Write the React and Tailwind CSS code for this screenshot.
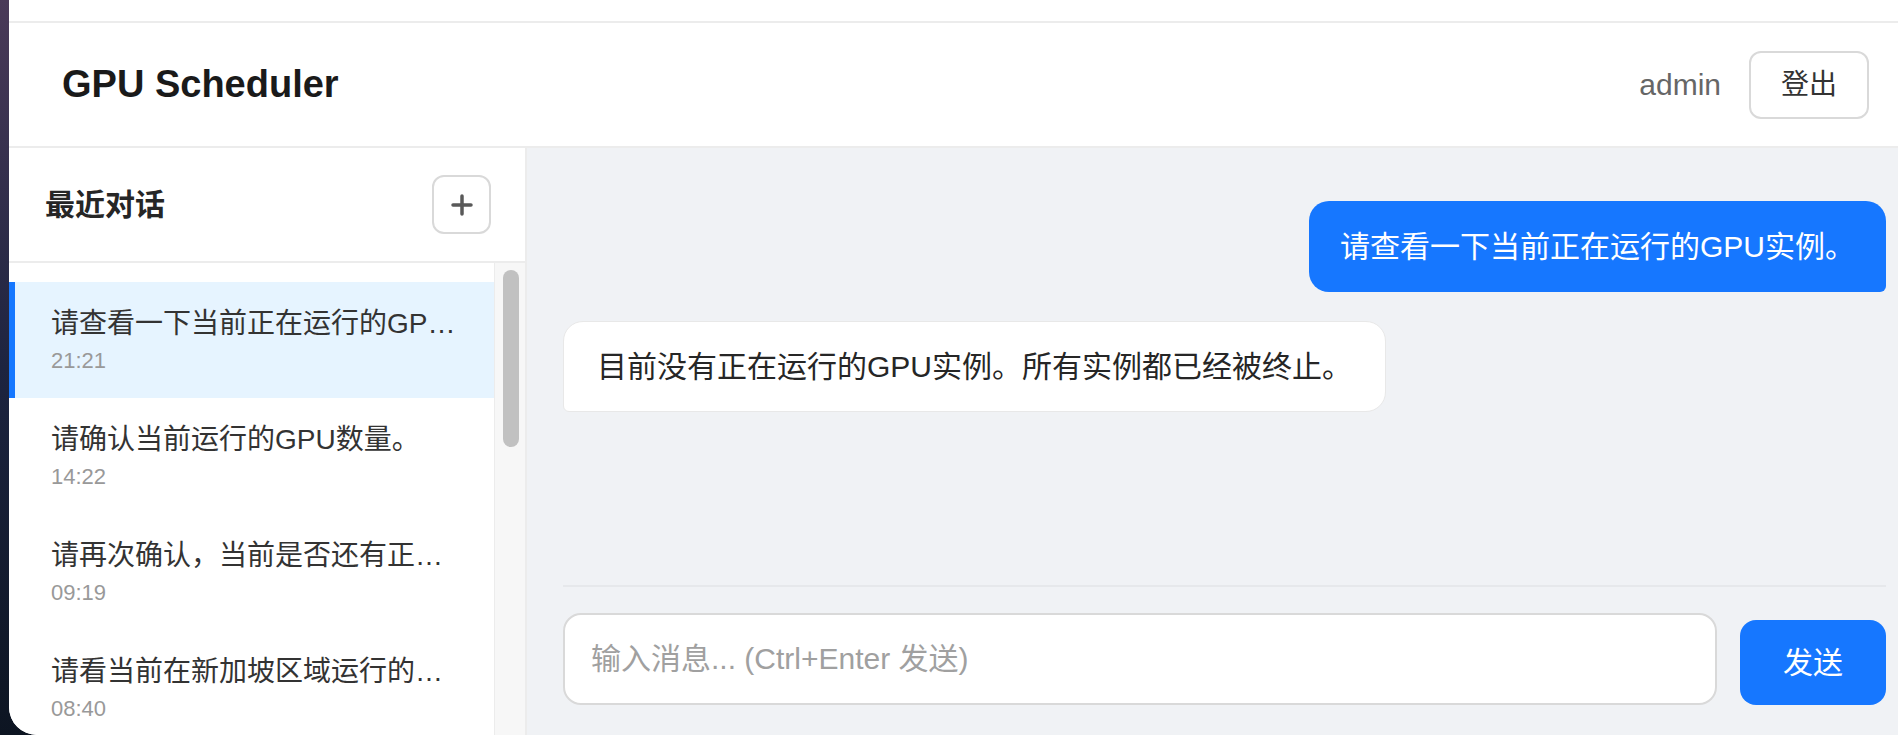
import React from 'react';

const conversations = [
  { title: '请查看一下当前正在运行的GPU实例。', time: '21:21', active: true },
  { title: '请确认当前运行的GPU数量。', time: '14:22' },
  { title: '请再次确认，当前是否还有正在运行的GPU实例？', time: '09:19' },
  { title: '请看当前在新加坡区域运行的GPU实例。', time: '08:40' },
];

export default function App() {
  return (
    <div className="flex h-[735px] w-[1898px] overflow-hidden bg-linear-to-b from-[#4a3a58] via-[#1d2440] to-[#0d1522] font-[family-name:'Liberation_Sans','Noto_Sans_CJK_SC',sans-serif]">
      {/* App window */}
      <div className="ml-[9px] flex flex-1 flex-col overflow-hidden rounded-bl-[28px] bg-white">
        {/* Top strip */}
        <div className="h-[23px] shrink-0 border-b-2 border-[#ececec] bg-white" />

        {/* Header */}
        <header className="flex h-[125px] shrink-0 items-center justify-between border-b-2 border-[#ececec] pl-[53px] pr-[29px]">
          <h1 className="text-[38px] font-bold text-[#1a1a1a]">GPU Scheduler</h1>
          <div className="flex items-center gap-[28px]">
            <span className="text-[30px] text-[#666]">admin</span>
            <button className="h-[68px] w-[120px] rounded-[12px] border-2 border-[#d9d9d9] bg-white text-[28px] text-[#333]">
              登出
            </button>
          </div>
        </header>

        <div className="flex min-h-0 flex-1">
          {/* Sidebar */}
          <aside className="flex w-[518px] shrink-0 flex-col border-r-2 border-[#ececec] bg-white">
            <div className="flex h-[115px] shrink-0 items-center justify-between border-b-2 border-[#ececec] pl-[36px] pr-[34px]">
              <span className="text-[30px] font-semibold text-[#262626]">最近对话</span>
              <button className="flex h-[59px] w-[59px] items-center justify-center rounded-[12px] border-2 border-[#d9d9d9] bg-white">
                <svg width="22" height="22" viewBox="0 0 22 22">
                  <path d="M11 2v18M2 11h18" stroke="#595959" strokeWidth="3.5" strokeLinecap="round" />
                </svg>
              </button>
            </div>

            <div className="flex min-h-0 flex-1">
              <div className="min-w-0 flex-1 overflow-hidden pt-[19px]">
                {conversations.map((c, i) => (
                  <div
                    key={i}
                    className={
                      c.active
                        ? 'border-l-[6px] border-[#1677ff] bg-[#e6f4ff] pb-[22px] pl-[36px] pr-[36px] pt-[25px]'
                        : 'border-l-[6px] border-transparent pb-[22px] pl-[36px] pr-[36px] pt-[25px]'
                    }
                  >
                    <div className="truncate text-[28px] leading-[34px] text-[#333]">{c.title}</div>
                    <div className="mt-[5px] text-[22px] leading-[30px] text-[#999]">{c.time}</div>
                  </div>
                ))}
              </div>
              {/* Scrollbar */}
              <div className="flex w-[31px] shrink-0 flex-col border-l border-[#ececec] bg-[#f7f7f7] pl-[8px] pt-[7px]">
                <div className="h-[177px] w-[16px] rounded-full bg-[#c1c1c1]" />
              </div>
            </div>
          </aside>

          {/* Chat area */}
          <main className="flex min-w-0 flex-1 flex-col bg-[#f0f2f5] pl-[36px] pr-[12px]">
            <div className="flex flex-1 flex-col gap-[29px] pt-[53px]">
              <div className="flex justify-end">
                <div className="rounded-[20px] rounded-br-[6px] bg-[#1677ff] px-[31px] py-[23px] text-[30px] leading-[45px] text-white">
                  请查看一下当前正在运行的GPU实例。
                </div>
              </div>
              <div className="flex justify-start">
                <div className="rounded-[20px] rounded-bl-[6px] border border-[#e8e8e8] bg-white px-[33px] py-[22px] text-[30px] leading-[45px] text-[#262626]">
                  目前没有正在运行的GPU实例。所有实例都已经被终止。
                </div>
              </div>
            </div>

            {/* Input */}
            <div className="flex h-[150px] shrink-0 items-end gap-[23px] border-t-2 border-[#e6e8eb] pb-[30px]">
              <textarea
                rows={1}
                placeholder="输入消息... (Ctrl+Enter 发送)"
                className="h-[92px] flex-1 resize-none overflow-hidden rounded-[18px] border-2 border-[#d9d9d9] bg-white px-[26px] py-[21px] text-[30px] leading-[45px] text-[#333] outline-none placeholder:text-[#a0a0a0]"
              />
              <button className="h-[85px] w-[146px] shrink-0 rounded-[16px] bg-[#1677ff] text-[30px] text-white">
                发送
              </button>
            </div>
          </main>
        </div>
      </div>
    </div>
  );
}
